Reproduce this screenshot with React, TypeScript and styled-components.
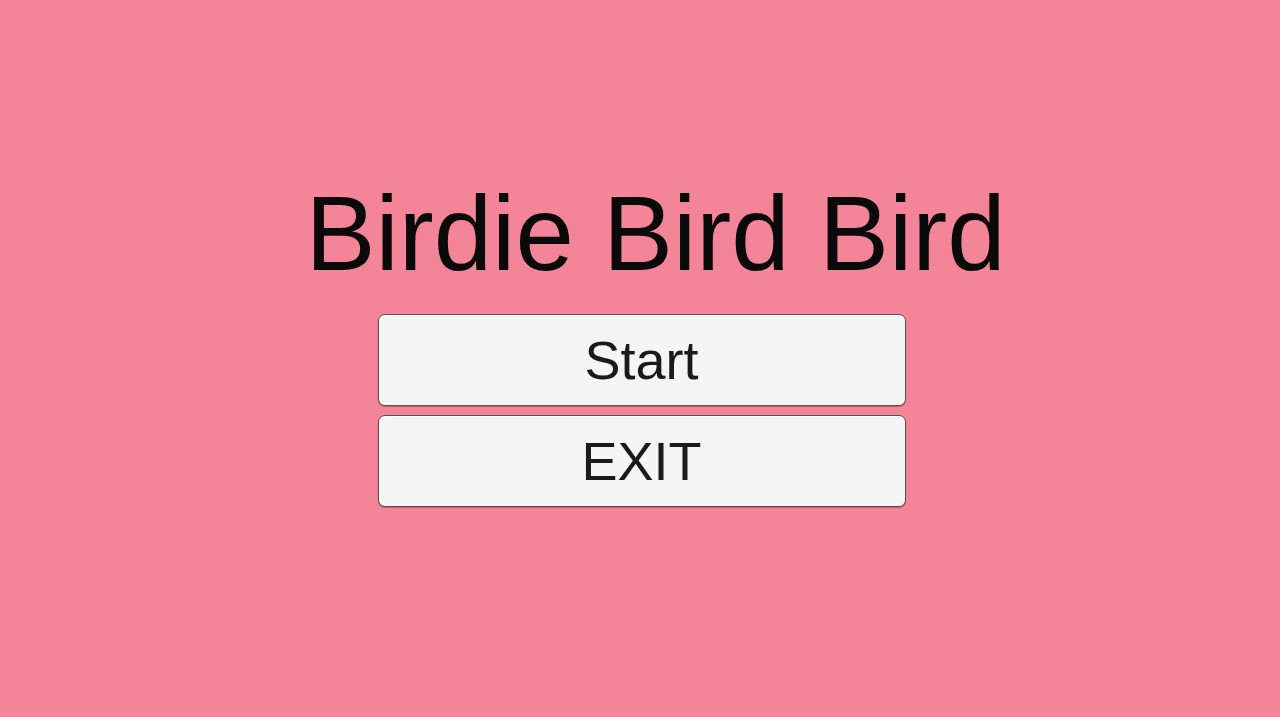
import React from "react";
import styled, { createGlobalStyle } from "styled-components";

const GlobalStyle = createGlobalStyle`
  html, body {
    margin: 0;
    padding: 0;
    background: #f48497;
  }
  #root {
    min-height: 100vh;
  }
`;

const Screen = styled.main`
  box-sizing: border-box;
  width: 100%;
  height: 717px;
  background: #f48497;
  display: flex;
  flex-direction: column;
  align-items: center;
  padding-top: 181px;
  font-family: "Liberation Sans", Arial, sans-serif;
  overflow: hidden;
`;

const Title = styled.h1`
  margin: 0;
  padding-left: 31px;
  font-size: 105px;
  line-height: 1;
  font-weight: 400;
  color: #0b0a0a;
  white-space: nowrap;
`;

const Menu = styled.nav`
  display: flex;
  flex-direction: column;
  gap: 9px;
  margin-top: 28px;
  margin-left: 3px;
`;

const MenuButton = styled.button`
  box-sizing: border-box;
  width: 528px;
  height: 92px;
  display: flex;
  align-items: center;
  justify-content: center;
  padding: 0;
  border: 1.5px solid #5a4e51;
  border-radius: 7px;
  background: #f5f5f5;
  box-shadow: inset 0 1px 0 #ffffff, 0 1px 1px rgba(60, 30, 40, 0.35);
  font-family: "Liberation Sans", Arial, sans-serif;
  font-size: 54px;
  line-height: 1;
  color: #1a1a1a;
  cursor: pointer;
`;

export default function App() {
  return (
    <>
      <GlobalStyle />
      <Screen>
        <Title>Birdie Bird Bird</Title>
        <Menu>
          <MenuButton type="button">Start</MenuButton>
          <MenuButton type="button">EXIT</MenuButton>
        </Menu>
      </Screen>
    </>
  );
}
